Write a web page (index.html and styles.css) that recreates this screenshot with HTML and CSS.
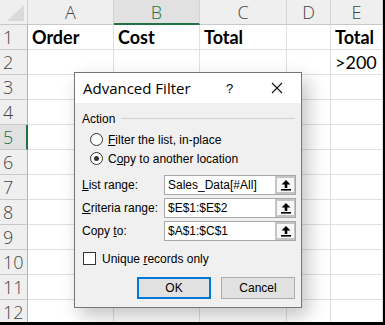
FILE: index.html
```html
<!DOCTYPE html>
<html>
    <head>
        <meta charset="utf-8">
        <title>Advanced Filter</title>
        <link rel="stylesheet" href="styles.css">
    </head>
    <body>
        <div id="sheet">
            <div class="grid">
                <div class="corner"><span class="tri"></span></div>
                <div class="colhead">A</div>
                <div class="colhead sel">B</div>
                <div class="colhead">C</div>
                <div class="colhead">D</div>
                <div class="colhead">E</div>

                <div class="rowhead">1</div>
                <div class="cell b">Order</div>
                <div class="cell b">Cost</div>
                <div class="cell b">Total</div>
                <div class="cell"></div>
                <div class="cell b">Total</div>

                <div class="rowhead">2</div>
                <div class="cell"></div>
                <div class="cell"></div>
                <div class="cell"></div>
                <div class="cell"></div>
                <div class="cell">&gt;200</div>
            </div>
            <div class="grid" id="rest"></div>

            <div id="dialog">
                <div class="titlebar">
                    <span class="title">Advanced Filter</span>
                    <span class="help">?</span>
                    <svg class="close" width="12" height="12" viewBox="0 0 12 12"><path d="M1 1L11 11M11 1L1 11" stroke="#111" stroke-width="1.1" fill="none"/></svg>
                </div>
                <div class="body">
                    <div class="group"><span>Action</span><i></i></div>
                    <label class="radio"><span class="dot"></span><span><u>F</u>ilter the list, in-place</span></label>
                    <label class="radio on"><span class="dot"></span><span>C<u>o</u>py to another location</span></label>

                    <div class="fields">
                        <span class="lbl"><u>L</u>ist range:</span>
                        <div class="range"><span class="val">Sales_Data[#All]</span><span class="pick"></span></div>
                        <span class="lbl"><u>C</u>riteria range:</span>
                        <div class="range"><span class="val">$E$1:$E$2</span><span class="pick"></span></div>
                        <span class="lbl">Copy <u>t</u>o:</span>
                        <div class="range"><span class="val">$A$1:$C$1</span><span class="pick"></span></div>
                    </div>

                    <label class="check"><span class="box"></span><span>Unique <u>r</u>ecords only</span></label>

                    <div class="buttons">
                        <button class="ok">OK</button>
                        <button>Cancel</button>
                    </div>
                </div>
            </div>
        </div>

        <script>
            (function() {
                // rows 3 to 12 are empty
                var rest = document.getElementById('rest');
                for (var r = 3; r <= 12; r++) {
                    var h = document.createElement('div');
                    h.className = 'rowhead' + (r == 5 ? ' sel' : '');
                    h.appendChild(document.createTextNode(r));
                    rest.appendChild(h);
                    for (var c = 0; c < 5; c++) {
                        var d = document.createElement('div');
                        d.className = 'cell';
                        rest.appendChild(d);
                    }
                }
                // arrow icon for the range pickers
                var picks = document.querySelectorAll('.pick');
                for (var i = 0; i < picks.length; i++) {
                    picks[i].innerHTML = '<svg width="12" height="12" viewBox="0 0 12 12">' +
                        '<path d="M6 1L10.5 5.5H7.3V9H4.7V5.5H1.5Z" fill="#000"/>' +
                        '<rect x="1" y="10" width="10" height="1.6" fill="#000"/></svg>';
                }
            }());
        </script>
    </body>
</html>
```

FILE: styles.css
```css
html, body {
    margin: 0;
    padding: 0;
    background: #000;
}
#sheet {
    position: relative;
    width: 383px;
    height: 322px;
    overflow: hidden;
    background: #fff;
}
.grid {
    display: grid;
    grid-template-columns: 28px 86px 86px 87px 44px 1fr;
    grid-auto-rows: 25px;
}
.corner, .colhead, .rowhead {
    background: #efefef;
    color: #444;
    font-family: "Open Sans", sans-serif;
    font-weight: 300;
    font-size: 18px;
    box-sizing: border-box;
    border-right: 1px solid #d2d2d2;
    border-bottom: 1px solid #c8c8c8;
}
.corner {
    position: relative;
}
.tri {
    position: absolute;
    right: 3px;
    bottom: 3px;
    width: 17px;
    height: 16px;
    background: #d9d9d9;
    clip-path: polygon(100% 0, 100% 100%, 0 100%);
}
.colhead {
    display: flex;
    align-items: center;
    justify-content: center;
}
.colhead.sel {
    background: #e1e1e1;
    color: #217346;
    border-bottom: 2px solid #217346;
}
.rowhead {
    display: flex;
    align-items: center;
    padding-left: 3px;
    border-right: 1px solid #b4b4b4;
}
.rowhead.sel {
    background: #e1e1e1;
    color: #217346;
    border-right: 2px solid #217346;
}
.cell {
    box-sizing: border-box;
    border-right: 1px solid #e0e0e0;
    border-bottom: 1px solid #e0e0e0;
    font-family: Lato, sans-serif;
    font-size: 18px;
    color: #000;
    padding-left: 4px;
    display: flex;
    align-items: center;
}
.cell.b {
    font-weight: bold;
}

#dialog {
    position: absolute;
    left: 74px;
    top: 72px;
    width: 228px;
    height: 236px;
    box-sizing: border-box;
    border: 1px solid #767676;
    background: #f0f0f0;
    box-shadow: 6px 8px 18px rgba(0, 0, 0, 0.24);
    font-family: "Liberation Sans", sans-serif;
    font-size: 12px;
    color: #000;
}
.titlebar {
    height: 30px;
    background: #fff;
    display: flex;
    align-items: center;
    padding-left: 8px;
}
.title {
    font-family: "Open Sans", sans-serif;
    font-size: 15px;
    flex: 1;
}
.help {
    font-size: 13px;
    width: 45px;
}
.close {
    margin-right: 18px;
}
.body {
    padding: 7px 6px 0 7px;
}
.group {
    display: flex;
    align-items: center;
    height: 17px;
    margin-bottom: 3px;
}
.group i {
    flex: 1;
    height: 1px;
    background: #d0d0d0;
    margin-left: 6px;
}
.radio, .check {
    display: flex;
    align-items: center;
    gap: 5px;
    height: 19px;
    padding-left: 8px;
}
.dot {
    width: 11px;
    height: 11px;
    border: 1px solid #333;
    border-radius: 50%;
    background: #fff;
    position: relative;
}
.radio.on .dot:after {
    content: "";
    position: absolute;
    left: 3px;
    top: 3px;
    width: 5px;
    height: 5px;
    border-radius: 50%;
    background: #333;
}
.fields {
    display: grid;
    grid-template-columns: 82px 132px;
    grid-auto-rows: 20px;
    row-gap: 3px;
    align-items: center;
    margin-top: 7px;
}
.range {
    display: flex;
    height: 20px;
    box-sizing: border-box;
    border: 1px solid #a8a8a8;
    background: #fff;
}
.val {
    flex: 1;
    padding-left: 3px;
    display: flex;
    align-items: center;
}
.pick {
    width: 20px;
    box-sizing: border-box;
    border: 2px solid #c4c4c4;
    border-right-width: 1px;
    background: #f7f7f7;
    display: flex;
    align-items: center;
    justify-content: center;
}
.check {
    padding-left: 1px;
    margin-top: 8px;
    gap: 6px;
}
.box {
    width: 11px;
    height: 11px;
    border: 1px solid #333;
    background: #fff;
}
.buttons {
    display: flex;
    justify-content: flex-end;
    gap: 10px;
    margin-top: 9px;
}
button {
    width: 74px;
    height: 22px;
    box-sizing: border-box;
    border: 1px solid #adadad;
    background: #e1e1e1;
    font-family: "Liberation Sans", sans-serif;
    font-size: 12px;
    color: #000;
    padding: 0;
}
button.ok {
    border: 2px solid #0078d7;
}
```
